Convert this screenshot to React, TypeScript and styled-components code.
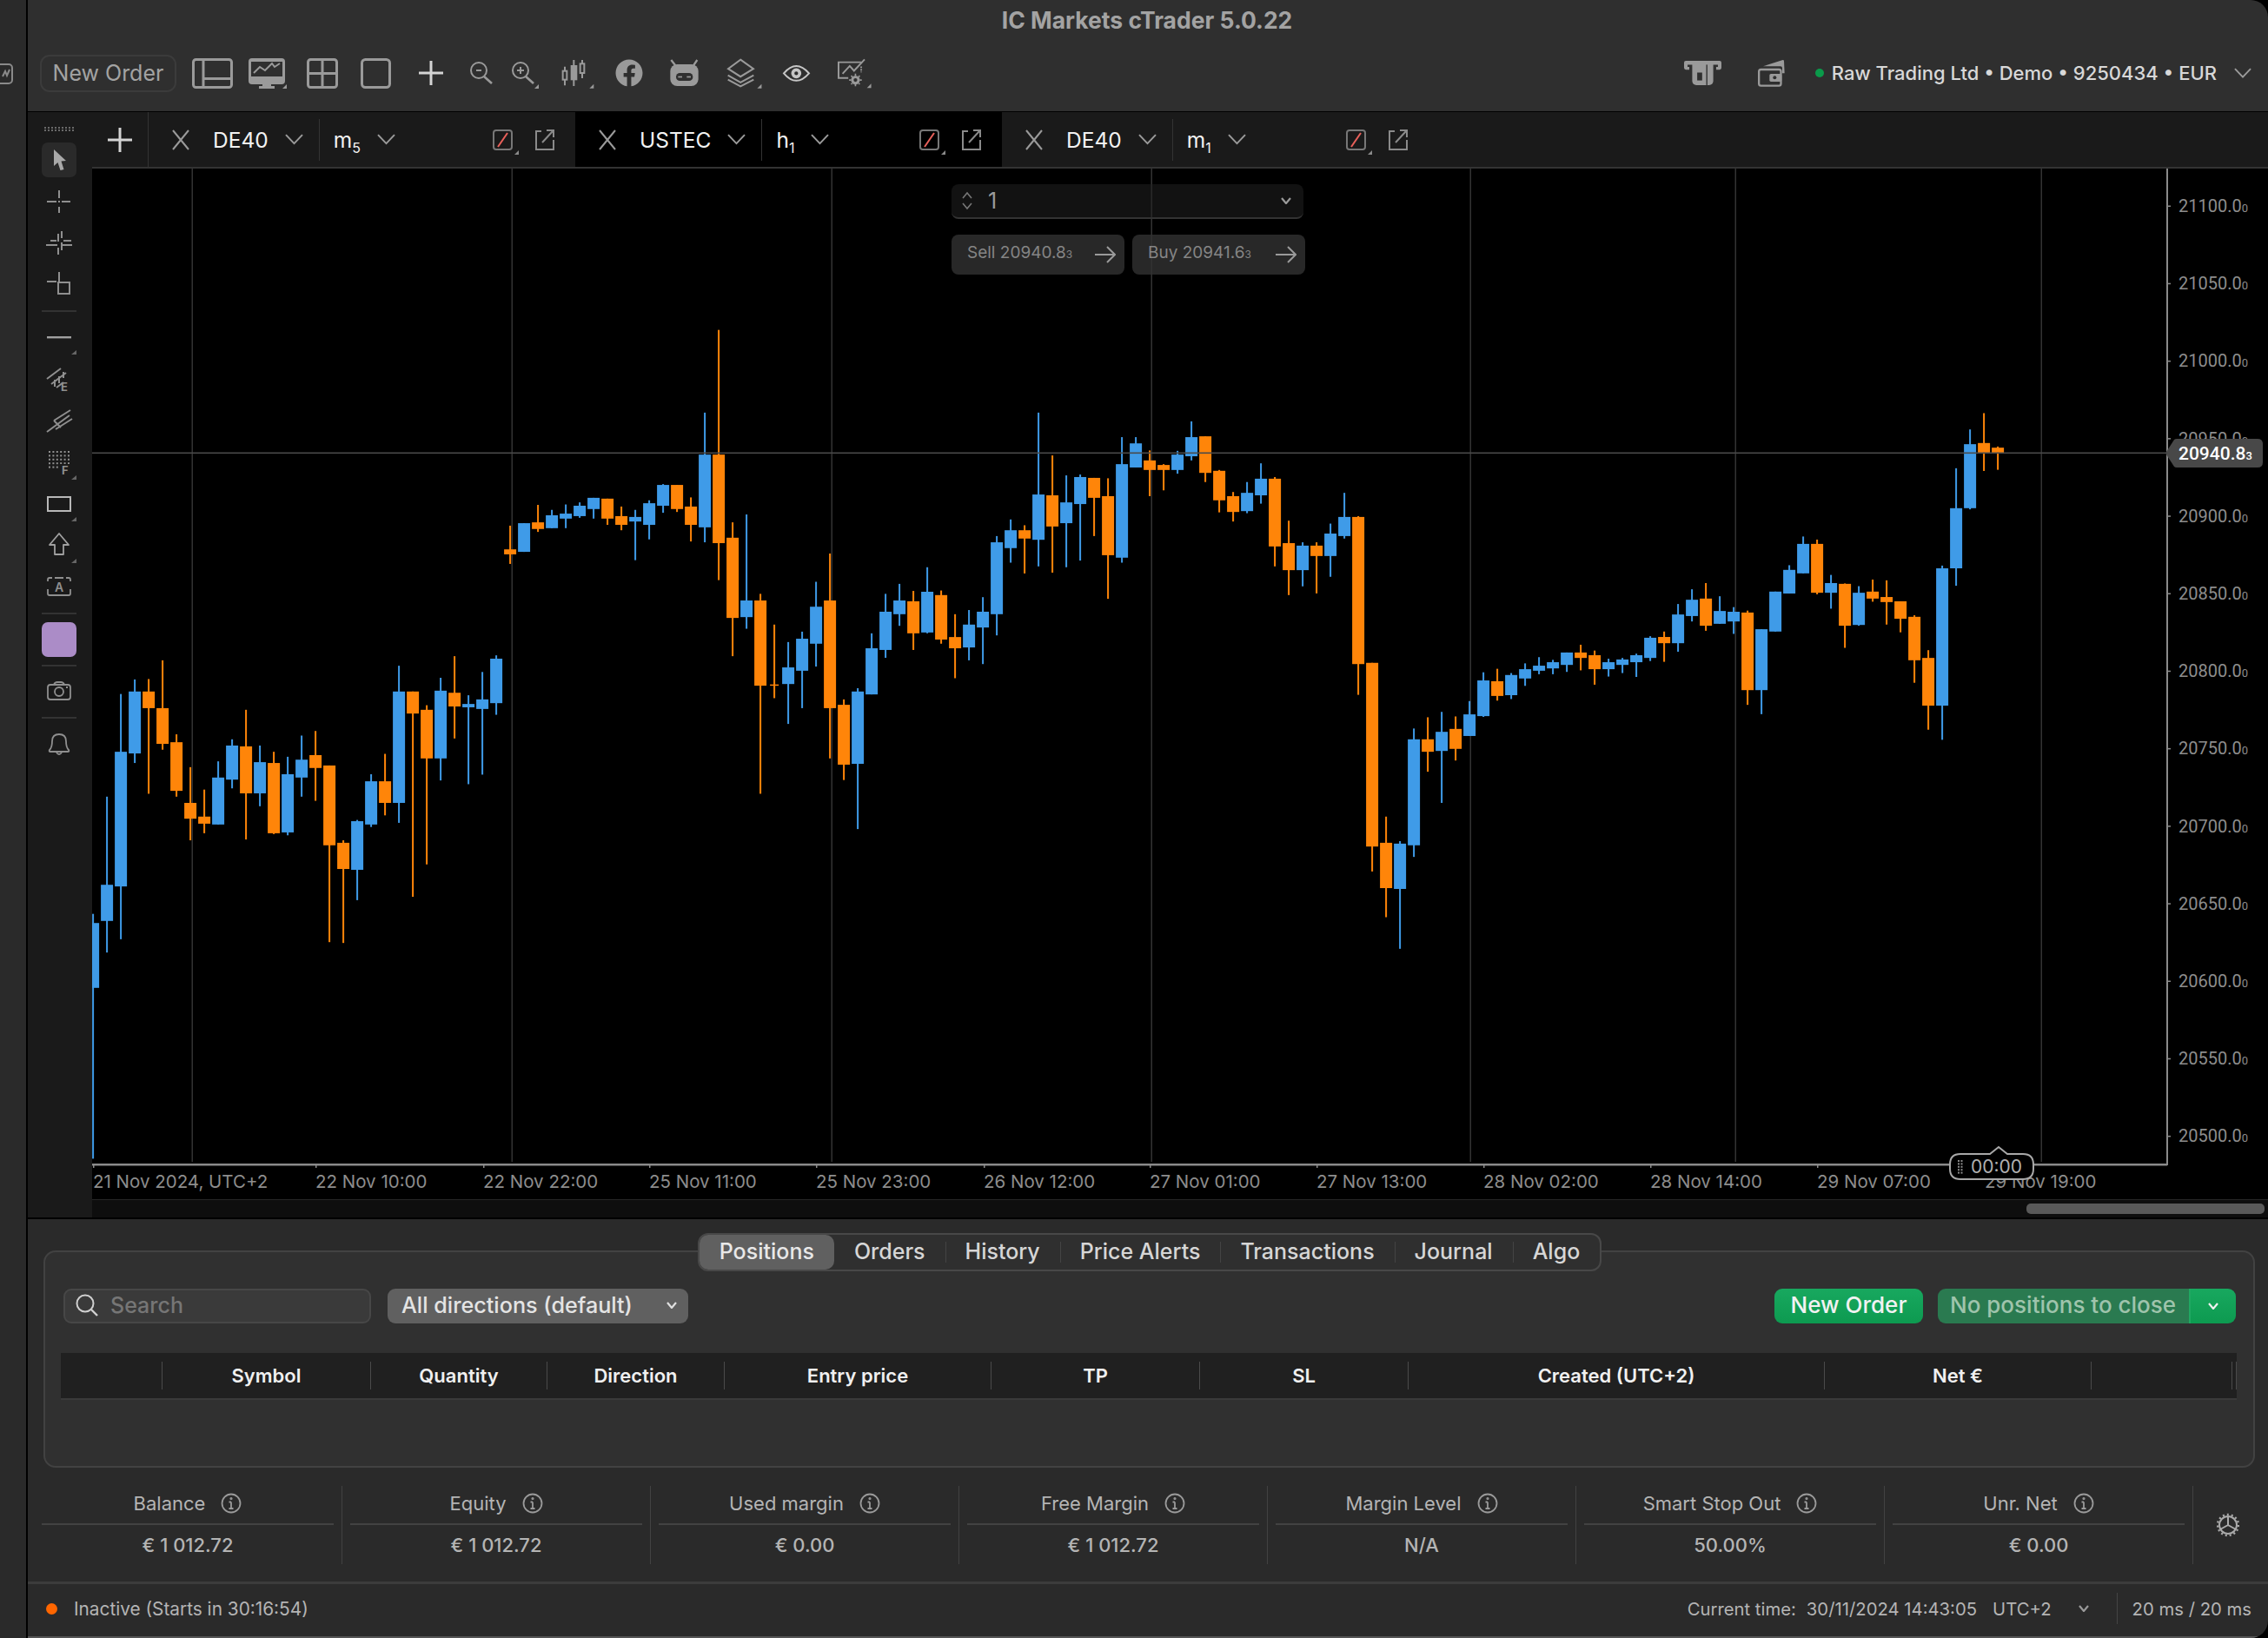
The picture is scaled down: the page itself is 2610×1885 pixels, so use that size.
import React from 'react';
import styled, { createGlobalStyle } from 'styled-components';
import { FaFacebook } from 'react-icons/fa';

const GlobalStyle = createGlobalStyle`
  html, body {
    margin: 0;
    padding: 0;
    background: #000;
    font-family: Inter, "Liberation Sans", sans-serif;
  }
  * { box-sizing: border-box; }
`;

const UI_GREY = '#9a9a9a';

const Frame = styled.div`
  display: flex;
  width: 2610px;
  height: 1885px;
  overflow: hidden;
  background: #000;
  border-radius: 0 20px 20px 0;
`;

const BackWindow = styled.div`
  width: 30px;
  margin-right: 2px;
  flex: none;
  background: #2a2a2a;
  padding-top: 73px;
  overflow: hidden;
`;

const Main = styled.div`
  flex: 1;
  min-width: 0;
  display: flex;
  flex-direction: column;
`;

const TitleBar = styled.header`
  height: 128px;
  margin-bottom: 1px;
  flex: none;
  background: #2f2f2f;
  display: flex;
  flex-direction: column;
`;

const WindowTitle = styled.div`
  height: 48px;
  padding: 5px 2px 0 0;
  text-align: center;
  font-size: 26.5px;
  font-weight: 700;
  line-height: 36px;
  color: #a3a3a3;
`;

const Toolbar = styled.div`
  display: flex;
  align-items: center;
  height: 70px;
  padding: 0 19px 0 14px;
  margin-top: 1px;
`;

const GhostButton = styled.button`
  width: 157px;
  height: 43px;
  flex: none;
  border: 2px solid #3b3b3b;
  border-radius: 11px;
  background: transparent;
  color: #a3a3a3;
  font: 400 25px Inter, sans-serif;
  padding: 0;
`;

const ToolIcon = styled.span<{ $w: number; $ml: number }>`
  display: flex;
  flex: none;
  width: ${(p) => p.$w}px;
  height: 36px;
  margin-left: ${(p) => p.$ml}px;
  align-items: center;
  justify-content: center;
  color: ${UI_GREY};

  svg { overflow: visible; display: block; }
`;

const AccountBlock = styled.div`
  margin-left: auto;
  display: flex;
  align-items: center;
`;

const GreenDot = styled.span`
  width: 10px;
  height: 10px;
  border-radius: 50%;
  background: #0a9a4a;
  margin-left: 34px;
`;

const AccountText = styled.span`
  margin-left: 9px;
  font-size: 22px;
  font-weight: 500;
  color: #d8d8d8;
  white-space: nowrap;
`;

const Workspace = styled.div`
  height: 1274px;
  flex: none;
  display: flex;
`;

const Sidebar = styled.aside`
  width: 74px;
  height: 1272px;
  flex: none;
  background: #1a1a1a;
  display: flex;
  flex-direction: column;
  align-items: flex-start;
  gap: 8px;
  padding: 17px 0 0 16px;
`;

const Grip = styled.div`
  height: 5px;
  margin: 0 0 5px 3px;
  display: flex;
`;

const ToolButton = styled.div<{ $active?: boolean; $corner?: boolean }>`
  position: relative;
  flex: none;
  width: 40px;
  height: 40px;
  border-radius: 7px;
  background: ${(p) => (p.$active ? '#2a2a2a' : 'transparent')};

  svg { display: block; }

  ${(p) =>
    p.$corner &&
    `&::after {
      content: '';
      position: absolute;
      right: 0;
      bottom: 0;
      border-style: solid;
      border-width: 0 0 5px 6px;
      border-color: transparent transparent #666 transparent;
    }`}
`;

const SideRule = styled.div`
  width: 40px;
  height: 2px;
  flex: none;
  margin: 1px 0;
  background: #333;
`;

const Swatch = styled.div`
  width: 40px;
  height: 40px;
  flex: none;
  border-radius: 7px;
  background: #ab8cc7;
`;

const ChartColumn = styled.div`
  flex: 1;
  min-width: 0;
  display: flex;
  flex-direction: column;
`;

const TabBar = styled.div`
  height: 65px;
  flex: none;
  display: flex;
  background: #1a1a1a;
  border-bottom: 2px solid #333;
`;

const AddTab = styled.div`
  width: 65px;
  flex: none;
  display: flex;
  align-items: center;
  padding-left: 18px;
  border-right: 1px solid #333;
  color: #d4d4d4;
`;

const Tab = styled.div<{ $active?: boolean }>`
  width: 491px;
  flex: none;
  display: flex;
  align-items: center;
  padding: 0 24px 0 25px;
  background: ${(p) => (p.$active ? '#000' : '#1a1a1a')};
  color: #f2f2f2;
  font-size: 24.5px;
  font-weight: 400;
`;

const TabSymbol = styled.span`
  margin-left: 25px;
`;

const TabChevron = styled.span`
  display: flex;
  margin-left: 19px;
  margin-right: 18px;
`;

const TabRule = styled.span`
  width: 1px;
  height: 48px;
  background: #333;
  margin-right: 16px;
`;

const Timeframe = styled.span`
  sub {
    font-size: 16px;
    line-height: 0;
    vertical-align: -6px;
  }
`;

const TabTools = styled.span`
  margin-left: auto;
  display: flex;
  gap: 25px;

  svg { overflow: visible; display: block; }
`;

const ChartArea = styled.div`
  position: relative;
  height: 1187px;
  flex: none;
  background: #000;

  > svg { display: block; }
`;

const OrderOverlay = styled.div`
  position: absolute;
  left: 989px;
  top: 18px;
  width: 407px;
  display: flex;
  flex-direction: column;
  gap: 18px;
`;

const QtyInput = styled.div`
  height: 40px;
  width: 405px;
  display: flex;
  align-items: center;
  padding: 0 14px 0 12px;
  border-radius: 8px;
  border-bottom: 2px solid #333;
  background: rgba(32, 32, 32, 0.55);
  color: #9a9a9a;
  font-size: 25px;

  span { margin-left: 18px; }
  svg:last-child { margin-left: auto; }
`;

const TradeRow = styled.div`
  display: flex;
  gap: 9px;
`;

const TradeButton = styled.div`
  width: 199px;
  height: 46px;
  display: flex;
  align-items: center;
  justify-content: space-between;
  padding: 0 10px 0 18px;
  border-radius: 8px;
  background: rgba(50, 50, 50, 0.8);
  color: #858585;
  font-size: 19px;

  span {
    padding-bottom: 6px;
  }

  small {
    font-size: 12px;
  }
`;

const ScrollStrip = styled.div`
  height: 20px;
  flex: none;
  background: #0e0e0e;
  display: flex;
  justify-content: flex-end;
  align-items: center;
  padding-right: 4px;
`;

const ScrollThumb = styled.div`
  width: 274px;
  height: 12px;
  border-radius: 5px;
  background: #595959;
`;

const AxisText = styled.text`
  font-family: Inter, sans-serif;
  font-size: 20.5px;
  fill: #8d8d8d;
`;

const PriceText = styled.text`
  font-family: Roboto, sans-serif;
  font-size: 20px;
  fill: #8d8d8d;
`;

const LivePrice = styled(PriceText)`
  fill: #fff;
  font-size: 21px;
  font-weight: 500;
`;

const CountdownText = styled(AxisText)`
  fill: #b0b0b0;
  font-size: 21px;
`;

const Panel = styled.section`
  flex: 1;
  min-height: 0;
  background: #2a2a2a;
  display: flex;
  flex-direction: column;
  padding-top: 36px;
`;

const Card = styled.div`
  height: 250px;
  flex: none;
  margin: 0 15px 0 18px;
  border: 2px solid #424242;
  border-radius: 14px;
  background: #303030;
  padding: 0 20px 0 21px;
  display: flex;
  flex-direction: column;
`;

const SegTabs = styled.div`
  align-self: center;
  margin-top: -22px;
  height: 44px;
  flex: none;
  display: flex;
  align-items: center;
  background: #2f2f2f;
  border: 2px solid #484848;
  border-radius: 12px;
`;

const SegTab = styled.div<{ $active?: boolean; $rule?: boolean }>`
  height: 40px;
  display: flex;
  align-items: center;
  padding: 0 23px 3px;
  font-size: 25px;
  font-weight: 500;
  white-space: nowrap;
  color: ${(p) => (p.$active ? '#e8e8e8' : '#d6d6d6')};
  background: ${(p) => (p.$active ? '#606060' : 'transparent')};
  border-radius: ${(p) => (p.$active ? '10px' : '0')};
  position: relative;

  ${(p) =>
    p.$rule &&
    `&::before {
      content: '';
      position: absolute;
      left: 0;
      top: 8px;
      bottom: 8px;
      width: 1px;
      background: #444;
    }`}
`;

const FilterRow = styled.div`
  display: flex;
  align-items: center;
  margin-top: 20px;
  height: 40px;
  flex: none;
`;

const SearchBox = styled.div`
  width: 354px;
  height: 40px;
  display: flex;
  align-items: center;
  gap: 14px;
  padding: 0 0 2px 12px;
  background: #3a3a3a;
  border: 2px solid #474747;
  border-radius: 9px;
  color: #767676;
  font-size: 25px;
  font-weight: 500;
`;

const SelectBox = styled.div`
  width: 346px;
  height: 40px;
  margin-left: 19px;
  display: flex;
  align-items: center;
  justify-content: space-between;
  padding: 0 13px 3px 16px;
  background: #606060;
  border-radius: 9px;
  color: #e4e4e4;
  font-size: 25.2px;
  font-weight: 500;
  white-space: nowrap;
`;

const GreenButton = styled.div`
  margin-left: auto;
  width: 171px;
  height: 40px;
  display: flex;
  align-items: center;
  justify-content: center;
  padding-bottom: 3px;
  border-radius: 9px;
  background: linear-gradient(#18a85f, #0d9a50);
  color: #f2f2f2;
  font-size: 26px;
  font-weight: 500;
`;

const SplitButton = styled.div`
  margin-left: 17px;
  width: 343px;
  height: 40px;
  display: flex;
  border-radius: 9px;
  overflow: hidden;
  font-size: 26px;
  font-weight: 500;
`;

const SplitMain = styled.div`
  flex: 1;
  display: flex;
  align-items: center;
  padding: 0 0 3px 14px;
  background: #2a7a50;
  color: #9fc4ac;
  white-space: nowrap;
  border-right: 2px solid #1fa862;
`;

const SplitArrow = styled.div`
  width: 52px;
  display: flex;
  align-items: center;
  justify-content: center;
  background: linear-gradient(#18a85f, #0d9a50);
`;

const TableHead = styled.div`
  margin: 34px 0 0 -3px;
  width: 2504px;
  height: 54px;
  flex: none;
  display: grid;
  grid-template-columns: 117px 240px 203px 204px 307px 240px 240px 479px 307px 162px 5px;
  align-items: center;
  background: #202020;
  border-bottom: 2px solid #3a3a3a;
`;

const HeadCell = styled.div`
  height: 32px;
  display: flex;
  align-items: center;
  justify-content: center;
  border-right: 1px solid #4a4a4a;
  font-size: 22px;
  font-weight: 600;
  color: #f0f0f0;
  white-space: nowrap;
`;

const StatsRow = styled.div`
  display: flex;
  margin: 21px 0 0 7px;
  height: 90px;
  flex: none;
  align-items: stretch;
`;

const Stat = styled.div`
  width: 355px;
  flex: none;
  padding: 0 9px;
  border-right: 1px solid #424242;
  display: flex;
  flex-direction: column;
`;

const StatLabel = styled.div`
  height: 45px;
  display: flex;
  align-items: center;
  justify-content: center;
  gap: 18px;
  padding-bottom: 4px;
  border-bottom: 2px solid #424242;
  font-size: 22px;
  color: #b4b4b4;

  svg { flex: none; }
`;

const StatValue = styled.div`
  flex: 1;
  display: flex;
  align-items: center;
  justify-content: center;
  font-size: 22px;
  font-weight: 500;
  color: #b4b4b4;
`;

const GearSlot = styled.div`
  flex: 1;
  display: flex;
  align-items: center;
  justify-content: center;
  padding-right: 6px;
  color: #aaa;
`;

const StatusBar = styled.footer`
  margin-top: 20px;
  flex: 1;
  display: flex;
  align-items: center;
  padding: 0 19px 4px 21px;
  border-top: 3px solid #3c3c3c;
  border-bottom: 2px solid #555;
  font-size: 20.8px;
  color: #b4b4b4;
  white-space: nowrap;
`;

const StatusDot = styled.span`
  width: 13px;
  height: 13px;
  border-radius: 50%;
  background: #ff6600;
  margin-right: 19px;
`;

const ClockBlock = styled.div`
  margin-left: auto;
  display: flex;
  align-items: center;
  height: 36px;
  font-size: 20.3px;
`;

const ClockDate = styled.span`
  margin-left: 12px;
`;

const ClockZone = styled.span`
  margin-left: 18px;
`;

const ClockChevron = styled.span`
  display: flex;
  margin: 0 32px 0 31px;
`;

const Latency = styled.span`
  height: 36px;
  display: flex;
  align-items: center;
  padding-left: 17px;
  border-left: 1px solid #444;
`;

// ---- chart data, read off the picture: [high, body top, body bottom, low, up?]
type Raw = [number, number, number, number, number];

const FROM_A: Raw[] = [
  [1467, 1489, 1645, 2056, 1], [1185, 1397, 1484, 1560, 1], [938, 1077, 1401, 1528, 1], [903, 932, 1081, 1104, 1],
  [902, 932, 972, 1178, 0], [857, 972, 1058, 1072, 0], [1035, 1054, 1171, 1185, 0], [1114, 1200, 1238, 1290, 0],
  [1168, 1233, 1250, 1273, 0], [1100, 1139, 1252, 1252, 1], [1047, 1062, 1144, 1165, 1], [976, 1064, 1177, 1288, 0],
  [1062, 1102, 1177, 1208, 1], [1077, 1104, 1273, 1275, 0], [1089, 1131, 1271, 1278, 1], [1038, 1096, 1139, 1185, 1],
  [1027, 1085, 1116, 1195, 0], [1110, 1110, 1302, 1535, 0], [1290, 1296, 1359, 1537, 0], [1241, 1244, 1361, 1434, 1],
  [1131, 1148, 1252, 1258, 1], [1082, 1148, 1200, 1230, 0], [870, 932, 1200, 1248, 1], [932, 932, 985, 1426, 0],
  [965, 976, 1093, 1348, 0], [899, 930, 1093, 1146, 1], [847, 935, 968, 1045, 0], [941, 962, 970, 1155, 1],
  [885, 951, 974, 1132, 1], [845, 853, 960, 988, 1], [533, 590, 602, 625, 0], [527, 527, 596, 596, 1],
  [483, 525, 541, 548, 0], [495, 508, 539, 539, 1], [482, 504, 516, 539, 1], [477, 485, 510, 514, 1],
  [466, 466, 493, 516, 1], [468, 468, 516, 531, 0], [487, 510, 531, 544, 0], [495, 512, 523, 616, 1],
  [472, 479, 531, 566, 1], [433, 435, 485, 502, 1], [435, 435, 493, 500, 0], [465, 487, 531, 571, 0],
  [261, 362, 537, 573, 1], [62, 362, 575, 664, 0], [525, 562, 755, 847, 0], [506, 713, 753, 781, 1],
  [697, 713, 918, 1178, 0], [771, 915, 918, 948, 0],
  [813, 874, 914, 1010, 1], [788, 805, 882, 972, 1], [668, 728, 817, 872, 1], [600, 713, 972, 1093, 0],
  [951, 964, 1108, 1145, 0], [924, 932, 1106, 1263, 1], [792, 828, 939, 939, 1], [697, 740, 832, 851, 1],
  [673, 713, 746, 774, 1], [690, 715, 792, 832, 0], [633, 692, 790, 792, 1], [689, 700, 807, 817, 0],
  [746, 801, 828, 900, 0], [736, 771, 826, 857, 1], [705, 740, 778, 866, 1], [558, 573, 746, 797, 1],
  [518, 544, 587, 622, 1], [532, 544, 564, 648, 0], [261, 458, 567, 631, 1], [364, 460, 535, 646, 0],
  [412, 477, 527, 633, 1], [410, 416, 481, 617, 1], [418, 418, 466, 558, 0], [419, 462, 604, 709, 0],
  [320, 385, 610, 622, 1], [320, 335, 393, 393, 1], [352, 376, 399, 462, 0], [385, 387, 399, 448, 0],
  [353, 362, 399, 408, 1], [282, 320, 366, 376, 1], [318, 318, 406, 428, 0], [399, 401, 472, 501, 0],
  [452, 462, 500, 523, 0], [428, 454, 498, 503, 1], [383, 420, 460, 480, 1], [416, 420, 583, 631, 0],
  [521, 575, 640, 700, 0], [573, 581, 640, 679, 1], [573, 581, 606, 696, 0], [528, 552, 606, 656, 1],
  [454, 512, 558, 564, 1], [510, 512, 866, 940, 0], [863, 863, 1305, 1365, 0], [1233, 1296, 1405, 1475, 0],
  [1292, 1298, 1407, 1551, 1], [1021, 1047, 1302, 1330, 1], [994, 1047, 1077, 1125, 0], [981, 1029, 1075, 1200, 1],
  [992, 1022, 1070, 1098, 0], [955, 987, 1039, 1039, 1],
];

const FROM_B: Raw[] = [
  [725, 746, 838, 840, 1], [716, 748, 786, 798, 0], [727, 732, 784, 794, 1], [702, 717, 741, 760, 1],
  [686, 708, 721, 730, 1], [693, 699, 715, 730, 1], [674, 674, 706, 724, 1], [654, 674, 688, 720, 0],
  [669, 681, 717, 757, 0], [690, 699, 717, 736, 1], [688, 692, 706, 727, 1], [677, 681, 699, 737, 1],
  [632, 636, 688, 696, 1], [620, 634, 650, 698, 0], [549, 576, 650, 672, 1], [511, 538, 580, 594, 1],
  [495, 535, 605, 618, 0], [529, 567, 600, 600, 1], [557, 569, 594, 626, 1], [566, 571, 771, 809, 0],
  [614, 614, 771, 833, 1], [517, 517, 620, 620, 1], [449, 461, 522, 522, 1], [375, 394, 470, 470, 1],
  [383, 394, 520, 524, 0], [474, 495, 520, 561, 1], [496, 497, 605, 662, 0], [503, 520, 603, 605, 1],
  [486, 517, 535, 543, 0], [488, 531, 544, 602, 0], [542, 542, 587, 622, 0], [578, 582, 694, 752, 0],
  [668, 688, 811, 873, 0], [450, 457, 811, 899, 1], [199, 302, 457, 502, 1], [99, 137, 302, 305, 1],
  [57, 134, 159, 206, 0], [143, 146, 159, 203, 0],
];

const toY = (v: number, scale: number, origin: number) => origin + v / scale;

const CANDLES = [
  ...FROM_A.map((c) => c.map((v, i) => (i < 4 ? toY(v, 2.0907, 350) : v))),
  ...FROM_B.map((c) => c.map((v, i) => (i < 4 ? toY(v, 2.24, 450) : v))),
];

const GRID_X = [221, 589, 957, 1325, 1692, 1997, 2349];
const PRICES = ['21100', '21050', '21000', '20950', '20900', '20850', '20800', '20750', '20700', '20650', '20600', '20550', '20500'];
const TIMES = [
  [107, '21 Nov 2024, UTC+2'], [363, '22 Nov 10:00'], [556, '22 Nov 22:00'], [747, '25 Nov 11:00'],
  [939, '25 Nov 23:00'], [1132, '26 Nov 12:00'], [1323, '27 Nov 01:00'], [1515, '27 Nov 13:00'],
  [1707, '28 Nov 02:00'], [1899, '28 Nov 14:00'], [2091, '29 Nov 07:00'], [2284, '29 Nov 19:00'],
] as [number, string][];

const BLUE = '#3f9be8';
const ORANGE = '#ff8509';

const PriceChart = () => (
  <svg width={2504} height={1187} viewBox="106 194 2504 1187">
    <clipPath id="plot">
      <rect x={106} y={194} width={2387} height={1143} />
    </clipPath>
    {GRID_X.map((x) => (
      <rect key={x} x={x - 0.5} y={194} width={1.5} height={1143} fill="#333" />
    ))}
    <g clipPath="url(#plot)">
      {CANDLES.map((c, i) => {
        const cx = 107.1 + 16 * i;
        const col = c[4] ? BLUE : ORANGE;
        const doji = i === 49;
        return (
          <g key={i} fill={col}>
            <rect x={cx - 1} y={c[0]} width={2} height={c[3] - c[0]} />
            <rect
              x={cx - (doji ? 5 : 7)}
              y={c[1]}
              width={doji ? 10 : 14}
              height={Math.max(c[2] - c[1], 1.5)}
            />
          </g>
        );
      })}
    </g>
    <rect x={106} y={520.5} width={2387} height={1.6} fill="#4a4a4a" />

    <rect x={106} y={1339} width={2388} height={2.5} fill="#8a8a8a" />
    <rect x={2493} y={194} width={2} height={1147} fill="#8a8a8a" />
    <rect x={106} y={1380} width={2504} height={1.5} fill="#262626" />

    {PRICES.map((p, i) => (
      <g key={p}>
        <rect x={2495} y={237 + i * 89.2 - 0.5} width={3} height={1.5} fill="#8a8a8a" />
        <PriceText x={2507} y={244 + i * 89.2}>
          {p}.0
          <tspan fontSize={13}>0</tspan>
        </PriceText>
      </g>
    ))}

    <path d="M2492 521.5 L2502 506 Q2503 505 2505 505 L2598 505 Q2604 505 2604 511 L2604 532 Q2604 538 2598 538 L2505 538 Q2503 538 2502 537 Z" fill="#484848" />
    <LivePrice x={2507} y={529}>
      20940.8
      <tspan fontSize={13}>3</tspan>
    </LivePrice>

    {TIMES.map(([x, label]) => (
      <g key={label}>
        <rect x={x} y={1341} width={1.5} height={3} fill="#8a8a8a" />
        <AxisText x={x} y={1367}>{label}</AxisText>
      </g>
    ))}

    <path d="M2256 1328 L2290 1328 L2300 1320 L2310 1328 L2328 1328 Q2340 1328 2340 1340 L2340 1345 Q2340 1357 2328 1357 L2256 1357 Q2244 1357 2244 1345 L2244 1340 Q2244 1328 2256 1328 Z" fill="#000" stroke="#a8a8a8" strokeWidth={2} />
    {[0, 1, 2, 3, 4].map((n) => (
      <g key={n} fill="#8a8a8a">
        <rect x={2253} y={1335 + n * 3.4} width={2} height={2} />
        <rect x={2256.5} y={1335 + n * 3.4} width={2} height={2} />
      </g>
    ))}
    <CountdownText x={2268} y={1350}>00:00</CountdownText>
  </svg>
);

// ---- icons
const Corner = ({ x, y, s = 5 }: { x: number; y: number; s?: number }) => (
  <polygon points={`${x},${y} ${x + s},${y - s} ${x + s},${y}`} fill="#9a9a9a" stroke="none" />
);

const Chevron = ({ w = 21, color = '#9a9a9a', sw = 2 }: { w?: number; color?: string; sw?: number }) => (
  <svg width={w} height={w * 0.58} viewBox="0 0 21 12" fill="none" stroke={color} strokeWidth={sw}>
    <path d="M1 1 L10.5 11 L20 1" />
  </svg>
);

const LayoutIcon = () => (
  <svg width={47} height={35} viewBox="0 0 47 35" fill="none" stroke="currentColor" strokeWidth={3}>
    <rect x={1.5} y={1.5} width={44} height={32} rx={3} />
    <path d="M13 2 V33 M13 23.5 H45" />
  </svg>
);

const MonitorIcon = () => (
  <svg width={44} height={35} viewBox="0 0 44 35">
    <rect width={42} height={30} rx={4} fill="currentColor" />
    <rect x={3} y={4} width={36} height={17} fill="#2f2f2f" />
    <path d="M6 17 L13 10 L19 14 L27 6 L30 10 L36 6" fill="none" stroke="currentColor" strokeWidth={2} />
    <rect x={16} y={30} width={10} height={3} fill="currentColor" />
    <rect x={12} y={32} width={18} height={3} fill="currentColor" />
    <Corner x={39} y={35} />
  </svg>
);

const GridIcon = () => (
  <svg width={36} height={35} viewBox="0 0 36 35" fill="none" stroke="currentColor" strokeWidth={3}>
    <rect x={1.5} y={1.5} width={33} height={32} rx={3} />
    <path d="M18 2 V33 M2 17.5 H34" />
  </svg>
);

const SingleIcon = () => (
  <svg width={35} height={35} viewBox="0 0 35 35" fill="none" stroke="currentColor" strokeWidth={3}>
    <rect x={1.5} y={1.5} width={32} height={32} rx={4} />
  </svg>
);

const PlusIcon = ({ color = '#d4d4d4' }: { color?: string }) => (
  <svg width={28} height={28} viewBox="0 0 28 28" fill="none" stroke={color} strokeWidth={3}>
    <path d="M14 0 V28 M0 14 H28" />
  </svg>
);

const ZoomIcon = ({ plus }: { plus?: boolean }) => (
  <svg width={26} height={26} viewBox="0 0 26 26" fill="none" stroke="currentColor" strokeWidth={2}>
    <circle cx={10} cy={10} r={9} />
    <path d="M16 17 L25 25" strokeWidth={2.6} />
    <path d={plus ? 'M6 10 H14 M10 6 V14' : 'M7 10 H13'} />
    {plus && <Corner x={26} y={31} />}
  </svg>
);

const CandlesIcon = () => (
  <svg width={28} height={30} viewBox="0 0 84 90" fill="none" stroke="currentColor" strokeWidth={6}>
    <rect x={5} y={38} width={14} height={30} />
    <path d="M12 23 V38 M12 68 V88" />
    <rect x={32} y={18} width={23} height={52} fill="currentColor" stroke="none" />
    <path d="M43 0 V90" />
    <rect x={65} y={13} width={14} height={32} />
    <path d="M72 0 V13 M72 45 V63" />
    <Corner x={97} y={98} s={15} />
  </svg>
);

const RobotIcon = () => (
  <svg width={33} height={30} viewBox="0 0 97 90">
    <path d="M3 0 L20 22 M93 0 L78 22" stroke="currentColor" strokeWidth={7} />
    <rect y={15} width={97} height={75} rx={24} fill="currentColor" />
    <rect x={20} y={45} width={58} height={27} rx={13} fill="#2f2f2f" />
    <rect x={27} y={56} width={14} height={5} fill="currentColor" />
    <rect x={57} y={56} width={14} height={5} fill="currentColor" />
  </svg>
);

const LayersIcon = () => (
  <svg width={31} height={32} viewBox="0 0 92 95" fill="none" stroke="currentColor" strokeWidth={6}>
    <path d="M45 2 L89 33 L45 60 L3 33 Z" />
    <path d="M2 55 L45 80 L90 55" />
    <path d="M2 70 L45 93 L90 70" />
    <Corner x={102} y={100} s={15} />
  </svg>
);

const EyeIcon = () => (
  <svg width={31} height={19} viewBox="0 0 93 57" fill="none" stroke="#c6c6c6" strokeWidth={6}>
    <path d="M3 28 Q46 -22 90 28 Q46 79 3 28 Z" />
    <circle cx={46} cy={28} r={12} strokeWidth={11} />
  </svg>
);

const ChartGearIcon = () => (
  <svg width={31} height={32} viewBox="0 0 94 95" fill="none" stroke="currentColor" strokeWidth={6}>
    <path d="M82 10 H3 V65 H37" />
    <path d="M17 50 L42 23 L57 40 L94 0" />
    <path d="M82 25 V45" strokeDasharray="5 4" />
    <circle cx={62} cy={72} r={11} strokeWidth={9} />
    <path d="M62 50 V94 M40 72 H84 M47 57 L77 87 M77 57 L47 87" strokeWidth={5} strokeDasharray="7 30" />
    <Corner x={102} y={100} s={15} />
  </svg>
);

const BridgeIcon = () => (
  <svg width={43} height={28} viewBox="0 0 128 83">
    <path
      d="M6 0 H122 Q128 0 128 6 V24 Q128 30 122 30 H110 V21 H116 V13 H100 V70 Q98 83 86 83 H42 Q30 83 28 70 V13 H12 V21 H18 V30 H6 Q0 30 0 24 V6 Q0 0 6 0 Z"
      fill="currentColor"
    />
    <rect x={45} y={40} width={17} height={27} fill="#2f2f2f" />
    <rect x={76} y={13} width={4} height={70} fill="#2f2f2f" />
  </svg>
);

const WalletIcon = () => (
  <svg width={31} height={31} viewBox="0 0 93 93">
    <path d="M18 22 L86 0 Q90 0 90 4 L92 46 H84 V28 Q84 22 78 22 Z" fill="currentColor" />
    <rect x={3.5} y={33} width={76} height={56} rx={7} fill="none" stroke="currentColor" strokeWidth={7} />
    <rect x={40} y={48} width={42} height={27} rx={5} fill="currentColor" />
    <circle cx={58} cy={61} r={6} fill="#2f2f2f" />
  </svg>
);

const CloseX = () => (
  <svg width={24} height={24} viewBox="0 0 24 24" stroke="#9a9a9a" strokeWidth={2}>
    <path d="M3 1 L21 23 M21 1 L3 23" />
  </svg>
);

const SlashBox = () => (
  <svg width={23} height={24} viewBox="0 0 23 24" fill="none">
    <rect x={1} y={1} width={21} height={22} rx={3} stroke="#777" strokeWidth={2} />
    <path d="M6 20 L17 4" stroke="#e8605a" strokeWidth={2} />
    <polygon points="25,29 30,24 30,29" fill="#8a8a8a" />
  </svg>
);

const PopOut = () => (
  <svg width={23} height={24} viewBox="0 0 23 24" fill="none" stroke="#8a8a8a" strokeWidth={2}>
    <path d="M8 2 H2 V23 H22 V12" />
    <path d="M9 15 L21 2 M14 1 H22 V9" />
  </svg>
);

const InfoIcon = () => (
  <svg width={24} height={24} viewBox="0 0 24 24" fill="none" stroke="#9a9a9a" strokeWidth={1.8}>
    <circle cx={12} cy={12} r={10.5} />
    <path d="M12 10.5 V18 M9.5 18 H14.5 M9.5 10.5 H12" />
    <circle cx={12} cy={6.5} r={0.7} />
  </svg>
);

const GearIcon = () => (
  <svg width={26} height={28} viewBox="0 0 26 28" fill="none" stroke="#aaa" strokeWidth={2}>
    <circle cx={13} cy={14} r={10} />
    <path d="M13 14 L13 4 M13 14 L4 19 M13 14 L22 19" />
    <circle cx={13} cy={14} r={12} strokeWidth={2.4} strokeDasharray="2 3" />
  </svg>
);

const SearchIcon = () => (
  <svg width={26} height={26} viewBox="0 0 26 26" fill="none" stroke="#d0d0d0" strokeWidth={2}>
    <circle cx={11} cy={11} r={9.5} />
    <path d="M18 18 L25 25" strokeWidth={2.4} />
  </svg>
);

const SmallChevron = ({ color = '#e0e0e0' }: { color?: string }) => (
  <svg width={12} height={8} viewBox="0 0 12 8" fill="none" stroke={color} strokeWidth={2.2}>
    <path d="M1 1 L6 7 L11 1" />
  </svg>
);

const Stepper = () => (
  <svg width={12} height={22} viewBox="0 0 12 22" fill="none" stroke="#777" strokeWidth={1.6}>
    <path d="M1 8 L6 2 L11 8 M1 14 L6 20 L11 14" />
  </svg>
);

const Arrow = () => (
  <svg width={24} height={20} viewBox="0 0 24 20" fill="none" stroke="#9a9a9a" strokeWidth={2}>
    <path d="M0 10 H23 M14 1 L23 10 L14 19" />
  </svg>
);

const Stroke = ({ d, sw = 2 }: { d: string; sw?: number }) => (
  <path d={d} fill="none" stroke="#8f8f8f" strokeWidth={sw} />
);

const Tool = ({ children, active, corner }: { children: React.ReactNode; active?: boolean; corner?: boolean }) => (
  <ToolButton $active={active} $corner={corner}>
    <svg width={40} height={40} viewBox="0 0 40 40">{children}</svg>
  </ToolButton>
);

const SideTools = () => (
  <Sidebar>
    <Grip>
      <svg width={34} height={5} viewBox="0 0 34 5" fill="#6a6a6a">
        {Array.from({ length: 9 }).map((_, i) => (
          <g key={i}>
            <rect x={i * 4} width={2} height={2} />
            <rect x={i * 4} y={3} width={2} height={2} />
          </g>
        ))}
      </svg>
    </Grip>
    <Tool active>
      <path d="M14 8 L28 21 L22.5 21.5 L25.5 31 L21.5 32 L18.5 23 L14 27 Z" fill="#a8a8a8" />
    </Tool>
    <Tool>
      <Stroke d="M6 20 H17 M23 20 H33 M20 7 V16 M20 26 V33" />
      <rect x={19} y={19} width={2} height={2} fill="#8f8f8f" />
    </Tool>
    <Tool>
      <Stroke d="M5 22 H18 M24 22 H35 M19 9 V18 M19 25 V33 M23 6 V14 M23 19 V28 M10 17 H17 M25 17 H34" />
    </Tool>
    <Tool>
      <Stroke d="M6 16 H17 M20 5 V16" />
      <rect x={19} y={17} width={13} height={13} fill="none" stroke="#8f8f8f" strokeWidth={2} />
    </Tool>
    <SideRule />
    <Tool corner>
      <rect x={6} y={19} width={28} height={2.4} fill="#a0a0a0" />
    </Tool>
    <Tool>
      <Stroke d="M6 20 L22 8 M11 26 L28 13 M17 30 L25 24 M15 21 V29 M20 17 V25 M25 12 V19" />
      <text x={22} y={34} fontSize={13} fontFamily="Inter" fontWeight={700} fill="#8f8f8f">E</text>
    </Tool>
    <Tool>
      <Stroke d="M6 33 L32 14 M14 20 L33 8 M16 30 L35 18 M14 20 L22 28" />
    </Tool>
    <Tool corner>
      {Array.from({ length: 30 }).map((_, i) => (
        <rect key={i} x={8 + (i % 6) * 4.4} y={7 + Math.floor(i / 6) * 4.4} width={2} height={2} fill="#8f8f8f" />
      ))}
      <rect x={20} y={22} width={14} height={14} fill="#1a1a1a" />
      <text x={23} y={34} fontSize={13} fontFamily="Inter" fontWeight={700} fill="#8f8f8f">F</text>
    </Tool>
    <Tool corner>
      <rect x={7} y={12} width={26} height={16} fill="none" stroke="#b8b8b8" strokeWidth={2} />
    </Tool>
    <Tool corner>
      <path d="M20 6 L31 19 H25 V30 H15 V19 H9 Z" fill="none" stroke="#a0a0a0" strokeWidth={1.8} strokeLinejoin="round" />
    </Tool>
    <Tool>
      <path d="M7 13 V11 Q7 9 9 9 H12 M28 9 H31 Q33 9 33 11 V13 M7 22 V27 Q7 29 9 29 H31 Q33 29 33 27 V22 M15 9 H25" fill="none" stroke="#8f8f8f" strokeWidth={1.8} />
      <text x={15} y={25} fontSize={14} fontFamily="Inter" fontWeight={600} fill="#8f8f8f">A</text>
    </Tool>
    <SideRule />
    <Swatch />
    <SideRule />
    <Tool>
      <rect x={7} y={12} width={26} height={17} rx={3} fill="none" stroke="#8f8f8f" strokeWidth={1.8} />
      <circle cx={20} cy={20} r={5} fill="none" stroke="#8f8f8f" strokeWidth={1.8} />
      <path d="M14 12 Q15 9 18 9 H22 Q25 9 26 12" fill="none" stroke="#8f8f8f" strokeWidth={1.8} />
      <rect x={28} y={14} width={2} height={2} fill="#8f8f8f" />
    </Tool>
    <SideRule />
    <Tool>
      <path d="M9 27 Q12 24 12 17 Q12 9 20 9 Q28 9 28 17 Q28 24 31 27 Q32 29 30 29 H10 Q8 29 9 27 Z" fill="none" stroke="#8f8f8f" strokeWidth={1.8} />
      <path d="M17 30 Q20 34 23 30" fill="none" stroke="#8f8f8f" strokeWidth={1.8} />
    </Tool>
  </Sidebar>
);

type TabInfo = { symbol: string; unit: string; size: string; active?: boolean };

const TABS: TabInfo[] = [
  { symbol: 'DE40', unit: 'm', size: '5' },
  { symbol: 'USTEC', unit: 'h', size: '1', active: true },
  { symbol: 'DE40', unit: 'm', size: '1' },
];

const SEG_TABS = ['Positions', 'Orders', 'History', 'Price Alerts', 'Transactions', 'Journal', 'Algo'];
const COLUMNS = ['', 'Symbol', 'Quantity', 'Direction', 'Entry price', 'TP', 'SL', 'Created (UTC+2)', 'Net €', '', ''];
const STATS = [
  ['Balance', '€ 1 012.72'], ['Equity', '€ 1 012.72'], ['Used margin', '€ 0.00'], ['Free Margin', '€ 1 012.72'],
  ['Margin Level', 'N/A'], ['Smart Stop Out', '50.00%'], ['Unr. Net', '€ 0.00'],
];

const App: React.FC = () => (
  <Frame>
    <GlobalStyle />
    <BackWindow>
      <svg width={30} height={24} viewBox="0 0 30 24" fill="none" stroke="#8a8a8a" strokeWidth={2}>
        <rect x={-20} y={1} width={34} height={22} rx={4} />
        <path d="M3 15 L6 9 L8 14 L11 7" />
      </svg>
    </BackWindow>
    <Main>
      <TitleBar>
        <WindowTitle>IC Markets cTrader 5.0.22</WindowTitle>
        <Toolbar>
          <GhostButton>New Order</GhostButton>
          <ToolIcon $w={47} $ml={18}><LayoutIcon /></ToolIcon>
          <ToolIcon $w={44} $ml={18}><MonitorIcon /></ToolIcon>
          <ToolIcon $w={36} $ml={23}><GridIcon /></ToolIcon>
          <ToolIcon $w={35} $ml={26}><SingleIcon /></ToolIcon>
          <ToolIcon $w={28} $ml={32}><PlusIcon /></ToolIcon>
          <ToolIcon $w={26} $ml={31}><ZoomIcon /></ToolIcon>
          <ToolIcon $w={26} $ml={22}><ZoomIcon plus /></ToolIcon>
          <ToolIcon $w={30} $ml={30}><CandlesIcon /></ToolIcon>
          <ToolIcon $w={33} $ml={32}><FaFacebook size={32} /></ToolIcon>
          <ToolIcon $w={35} $ml={30}><RobotIcon /></ToolIcon>
          <ToolIcon $w={31} $ml={32}><LayersIcon /></ToolIcon>
          <ToolIcon $w={33} $ml={32}><EyeIcon /></ToolIcon>
          <ToolIcon $w={33} $ml={30}><ChartGearIcon /></ToolIcon>
          <AccountBlock>
            <ToolIcon $w={45} $ml={0}><BridgeIcon /></ToolIcon>
            <ToolIcon $w={33} $ml={40}><WalletIcon /></ToolIcon>
            <GreenDot />
            <AccountText>Raw Trading Ltd • Demo • 9250434 • EUR</AccountText>
            <ToolIcon $w={20} $ml={20}><Chevron w={20} /></ToolIcon>
          </AccountBlock>
        </Toolbar>
      </TitleBar>

      <Workspace>
        <SideTools />
        <ChartColumn>
          <TabBar>
            <AddTab><PlusIcon /></AddTab>
            {TABS.map((t, i) => (
              <Tab key={i} $active={t.active}>
                <CloseX />
                <TabSymbol>{t.symbol}</TabSymbol>
                <TabChevron><Chevron /></TabChevron>
                <TabRule />
                <Timeframe>{t.unit}<sub>{t.size}</sub></Timeframe>
                <TabChevron><Chevron /></TabChevron>
                <TabTools><SlashBox /><PopOut /></TabTools>
              </Tab>
            ))}
          </TabBar>
          <ChartArea>
            <PriceChart />
            <OrderOverlay>
              <QtyInput>
                <Stepper />
                <span>1</span>
                <SmallChevron color="#9a9a9a" />
              </QtyInput>
              <TradeRow>
                <TradeButton><span>Sell 20940.8<small>3</small></span><Arrow /></TradeButton>
                <TradeButton><span>Buy 20941.6<small>3</small></span><Arrow /></TradeButton>
              </TradeRow>
            </OrderOverlay>
          </ChartArea>
          <ScrollStrip><ScrollThumb /></ScrollStrip>
        </ChartColumn>
      </Workspace>

      <Panel>
        <Card>
          <SegTabs>
            {SEG_TABS.map((t, i) => (
              <SegTab key={t} $active={i === 0} $rule={i > 1}>{t}</SegTab>
            ))}
          </SegTabs>
          <FilterRow>
            <SearchBox><SearchIcon />Search</SearchBox>
            <SelectBox>All directions (default)<SmallChevron /></SelectBox>
            <GreenButton>New Order</GreenButton>
            <SplitButton>
              <SplitMain>No positions to close</SplitMain>
              <SplitArrow><SmallChevron color="#f0f0f0" /></SplitArrow>
            </SplitButton>
          </FilterRow>
          <TableHead>
            {COLUMNS.map((c, i) => (
              <HeadCell key={i}>{c}</HeadCell>
            ))}
          </TableHead>
        </Card>
        <StatsRow>
          {STATS.map(([label, value]) => (
            <Stat key={label}>
              <StatLabel>{label}<InfoIcon /></StatLabel>
              <StatValue>{value}</StatValue>
            </Stat>
          ))}
          <GearSlot><GearIcon /></GearSlot>
        </StatsRow>
        <StatusBar>
          <StatusDot />
          Inactive (Starts in 30:16:54)
          <ClockBlock>
            Current time:
            <ClockDate>30/11/2024 14:43:05</ClockDate>
            <ClockZone>UTC+2</ClockZone>
            <ClockChevron><SmallChevron color="#9a9a9a" /></ClockChevron>
            <Latency>20 ms / 20 ms</Latency>
          </ClockBlock>
        </StatusBar>
      </Panel>
    </Main>
  </Frame>
);

export default App;
